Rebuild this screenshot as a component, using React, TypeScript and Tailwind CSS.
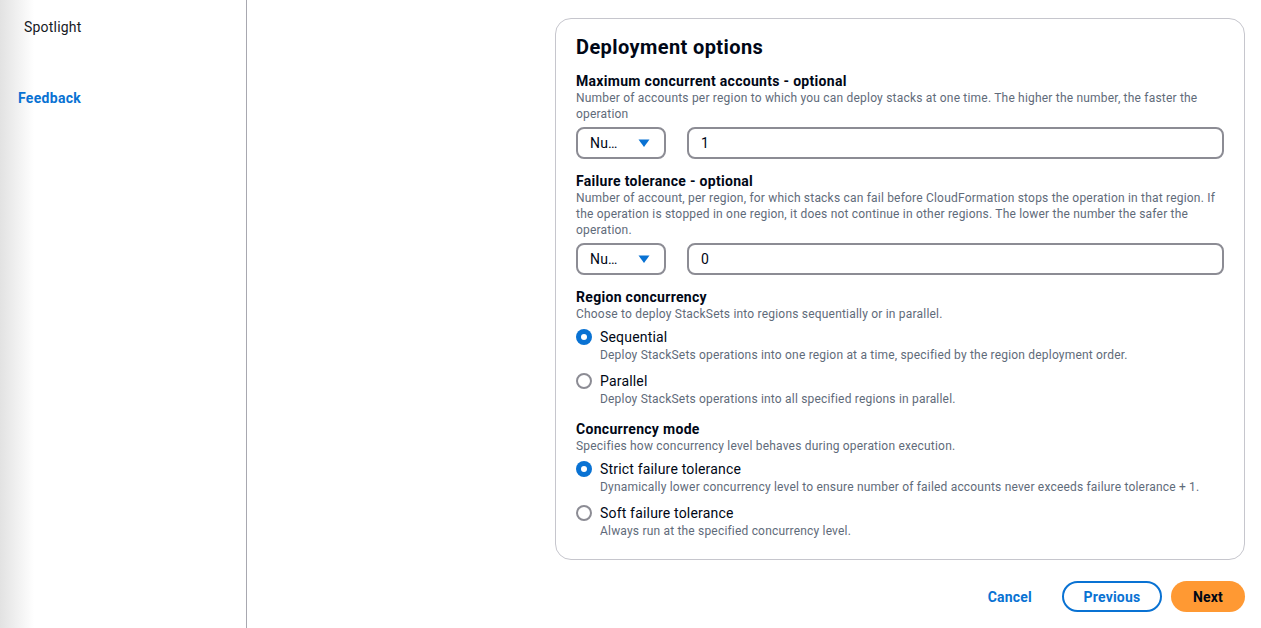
import { useState } from 'react';

function Caret() {
  return (
    <svg viewBox="0 0 16 16" className="w-4 h-4">
      <path d="M2.5 4.5h11L8 12z" fill="#0972d3" />
    </svg>
  );
}

function Radio({ checked }: { checked: boolean }) {
  return checked ? (
    <span className="w-4 h-4 rounded-full bg-[#0972d3] flex items-center justify-center shrink-0">
      <span className="w-[6px] h-[6px] rounded-full bg-white" />
    </span>
  ) : (
    <span className="w-4 h-4 rounded-full border-2 border-[#8c8c94] bg-white shrink-0" />
  );
}

function SelectInput({ value }: { value: string }) {
  return (
    <div className="flex gap-[21px] mt-[5px]">
      <div className="w-[90px] h-[32px] border-2 border-[#8c8c94] rounded-lg flex items-center justify-between pl-3 pr-[12px] text-sm tracking-[0.2px] text-[#000716]">
        <span>Nu…</span>
        <Caret />
      </div>
      <div className="flex-1 h-[32px] border-2 border-[#8c8c94] rounded-lg flex items-center px-3 text-sm text-[#000716]">
        {value}
      </div>
    </div>
  );
}

type Opt = { label: string; desc: string };

function RadioGroup({ options, selected, onSelect }: { options: Opt[]; selected: number; onSelect: (i: number) => void }) {
  return (
    <div className="flex flex-col gap-2 mt-[5px]">
      {options.map((o, i) => (
        <div key={o.label} className="flex gap-2 cursor-pointer" onClick={() => onSelect(i)}>
          <div className="h-5 flex items-center">
            <Radio checked={selected === i} />
          </div>
          <div>
            <div className="text-sm leading-5 tracking-[0.18px] text-[#000716]">{o.label}</div>
            <div className="text-xs leading-4 tracking-[0.19px] text-[#5f6b7a]">{o.desc}</div>
          </div>
        </div>
      ))}
    </div>
  );
}

function Field({ label, desc, children }: { label: string; desc: string; children: React.ReactNode }) {
  return (
    <div>
      <div className="text-sm font-bold leading-[18px] tracking-[0.3px] text-[#000716]">{label}</div>
      <div className="text-xs leading-4 tracking-[0.2px] text-[#5f6b7a]">{desc}</div>
      {children}
    </div>
  );
}

export default function App() {
  const [region, setRegion] = useState(0);
  const [mode, setMode] = useState(0);

  return (
    <div className="flex h-[628px] w-full overflow-hidden bg-white font-['Roboto',sans-serif]">
      <aside className="w-[247px] shrink-0 border-r border-[#a8a8b0] bg-[linear-gradient(to_right,#e2e2e2,#fff_34px)]">
        <div className="pl-6 pt-[17px] text-sm leading-5 tracking-[0.2px] text-[#16191f]">Spotlight</div>
        <div className="pl-[18px] pt-[51px] text-sm font-bold leading-5 tracking-[0.3px] text-[#0972d3]">Feedback</div>
      </aside>

      <main className="flex-1 flex justify-end pr-[16px] pt-[18px]">
        <div className="w-[690px]">
          <section className="border border-[#c6c6cd] rounded-2xl px-5 pt-4 pb-5">
            <h2 className="text-xl font-bold leading-6 tracking-[0.4px] text-[#000716] mb-[13px]">Deployment options</h2>
            <div className="flex flex-col gap-[13px]">
              <Field
                label="Maximum concurrent accounts - optional"
                desc="Number of accounts per region to which you can deploy stacks at one time. The higher the number, the faster the operation"
              >
                <SelectInput value="1" />
              </Field>
              <Field
                label="Failure tolerance - optional"
                desc="Number of account, per region, for which stacks can fail before CloudFormation stops the operation in that region. If the operation is stopped in one region, it does not continue in other regions. The lower the number the safer the operation."
              >
                <SelectInput value="0" />
              </Field>
              <Field label="Region concurrency" desc="Choose to deploy StackSets into regions sequentially or in parallel.">
                <RadioGroup
                  selected={region}
                  onSelect={setRegion}
                  options={[
                    { label: 'Sequential', desc: 'Deploy StackSets operations into one region at a time, specified by the region deployment order.' },
                    { label: 'Parallel', desc: 'Deploy StackSets operations into all specified regions in parallel.' },
                  ]}
                />
              </Field>
              <Field label="Concurrency mode" desc="Specifies how concurrency level behaves during operation execution.">
                <RadioGroup
                  selected={mode}
                  onSelect={setMode}
                  options={[
                    { label: 'Strict failure tolerance', desc: 'Dynamically lower concurrency level to ensure number of failed accounts never exceeds failure tolerance + 1.' },
                    { label: 'Soft failure tolerance', desc: 'Always run at the specified concurrency level.' },
                  ]}
                />
              </Field>
            </div>
          </section>

          <div className="flex justify-end items-center gap-[9px] mt-[21px]">
            <button className="h-[31px] px-5 text-sm font-bold tracking-[0.2px] text-[#0972d3] mr-[1px]">Cancel</button>
            <button className="h-[31px] w-[100px] rounded-full border-2 border-[#0972d3] text-sm font-bold tracking-[0.2px] text-[#0972d3]">Previous</button>
            <button className="h-[31px] w-[74px] rounded-full bg-[#ff9933] text-sm font-bold tracking-[0.2px] text-[#000716]">Next</button>
          </div>
        </div>
      </main>
    </div>
  );
}
